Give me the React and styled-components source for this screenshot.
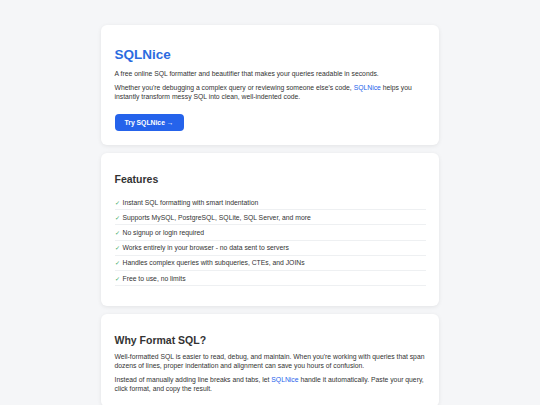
import styled, { createGlobalStyle } from 'styled-components';

const GlobalStyle = createGlobalStyle`
  html, body {
    margin: 0;
    padding: 0;
    background: #f5f6f8;
    font-family: 'Liberation Sans', Arial, sans-serif;
    color: #333;
  }
`;

const Page = styled.main`
  width: 338px;
  margin: 0 auto;
  padding: 25px 0;
  display: flex;
  flex-direction: column;
  gap: 8px;
`;

const Card = styled.section`
  background: #fff;
  border-radius: 6px;
  box-shadow: 0 1px 4px rgba(0, 0, 0, 0.08);
  padding: 13.5px;
`;

const Title = styled.h1`
  margin: 8px 0 0;
  font-size: 13.5px;
  line-height: 1.2;
  font-weight: 700;
  color: #2b6be0;
`;

const Heading = styled.h2`
  margin: 6.5px 0 0;
  font-size: 10.5px;
  line-height: 1.2;
  font-weight: 700;
  color: #333;
`;

const Text = styled.p`
  margin: ${({ $first }) => ($first ? '7px' : '5.3px')} 0 0;
  font-size: 6.8px;
  line-height: 8.8px;
  color: #333;
`;

const Brand = styled.a`
  color: #2563eb;
  text-decoration: none;
`;

const Button = styled.a`
  display: inline-flex;
  align-items: center;
  margin-top: 13px;
  height: 17px;
  padding: 0 10px;
  border-radius: 4px;
  background: #2563eb;
  color: #fff;
  font-size: 6.8px;
  font-weight: 700;
  text-decoration: none;
`;

const List = styled.ul`
  list-style: none;
  margin: 9.5px 0 6px;
  padding: 0;
`;

const Item = styled.li`
  display: flex;
  align-items: center;
  gap: 3px;
  height: 15.2px;
  box-sizing: border-box;
  border-bottom: 1px solid #eef0f2;
  font-size: 6.8px;
  color: #333;
`;

const Check = styled.span`
  color: #3aa864;
  font-size: 6px;
`;

const features = [
  'Instant SQL formatting with smart indentation',
  'Supports MySQL, PostgreSQL, SQLite, SQL Server, and more',
  'No signup or login required',
  'Works entirely in your browser - no data sent to servers',
  'Handles complex queries with subqueries, CTEs, and JOINs',
  'Free to use, no limits',
];

export default function App() {
  return (
    <>
      <GlobalStyle />
      <Page>
        <Card>
          <Title>SQLNice</Title>
          <Text $first>
            A free online SQL formatter and beautifier that makes your queries readable in seconds.
          </Text>
          <Text>
            Whether you're debugging a complex query or reviewing someone else's code,{' '}
            <Brand href="#">SQLNice</Brand> helps you instantly transform messy SQL into clean,
            well-indented code.
          </Text>
          <Button href="#">Try SQLNice →</Button>
        </Card>

        <Card>
          <Heading>Features</Heading>
          <List>
            {features.map((f) => (
              <Item key={f}>
                <Check>✓</Check>
                {f}
              </Item>
            ))}
          </List>
        </Card>

        <Card>
          <Heading>Why Format SQL?</Heading>
          <Text $first>
            Well-formatted SQL is easier to read, debug, and maintain. When you're working with
            queries that span dozens of lines, proper indentation and alignment can save you hours
            of confusion.
          </Text>
          <Text>
            Instead of manually adding line breaks and tabs, let <Brand href="#">SQLNice</Brand>{' '}
            handle it automatically. Paste your query, click format, and copy the result.
          </Text>
        </Card>
      </Page>
    </>
  );
}
